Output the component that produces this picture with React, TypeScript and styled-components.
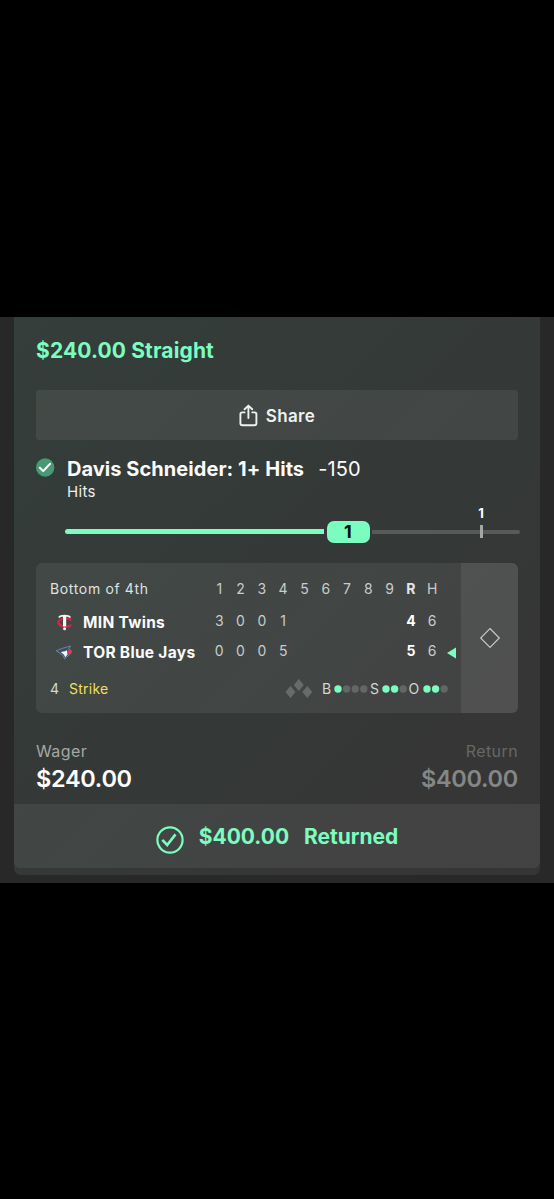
import React from "react";
import styled, { createGlobalStyle } from "styled-components";

const MINT = "#7cfdc0";

const GlobalStyle = createGlobalStyle`
  *, *::before, *::after { box-sizing: border-box; }
  body {
    margin: 0;
    background: #000;
    font-family: Inter, "Liberation Sans", sans-serif;
    -webkit-font-smoothing: antialiased;
  }
`;

const Screen = styled.div`
  width: 554px;
  height: 1199px;
  padding-top: 317px;
  background: #000;
  overflow: hidden;
`;

const Viewport = styled.main`
  height: 566px;
  padding: 0 14px;
  background: #282828;
`;

const Card = styled.article`
  display: flex;
  flex-direction: column;
  height: 558px;
  border-radius: 0 0 7px 7px;
  background: linear-gradient(135deg, #343e3a 0%, #343a38 40%, #353736 72%, #353535 100%);
`;

const Content = styled.div`
  height: 487px;
  padding: 21px 22px 0 22px;
`;

const BetTitle = styled.h1`
  margin: 0;
  height: 25px;
  line-height: 25px;
  font-size: 21px;
  font-weight: 700;
  letter-spacing: 0.14px;
  color: ${MINT};
  white-space: nowrap;
`;

const ShareButton = styled.button`
  display: flex;
  align-items: center;
  justify-content: center;
  gap: 8px;
  width: 100%;
  height: 50px;
  margin-top: 27px;
  padding: 0;
  border: 0;
  border-radius: 3px;
  background: rgba(255, 255, 255, 0.07);
  color: #eef1ef;
  font: 600 17px/20px Inter, sans-serif;
  letter-spacing: 0.35px;
`;

const ShareLabel = styled.span`
  padding-top: 1px;
`;

const Leg = styled.section`
  display: grid;
  grid-template-columns: 31px 1fr;
  margin-top: 17px;
  height: 45px;
`;

const LegStatus = styled.div`
  padding-top: 1px;
  line-height: 0;
`;

const LegName = styled.div`
  display: flex;
  gap: 14px;
  height: 23px;
  line-height: 24px;
  font-size: 20px;
  font-weight: 700;
  letter-spacing: 0.05px;
  color: #fbfcfb;
  white-space: nowrap;
`;

const Odds = styled.span`
  font-weight: 400;
  letter-spacing: 0.1px;
`;

const Market = styled.div`
  height: 20px;
  line-height: 23px;
  font-size: 15px;
  letter-spacing: 0.3px;
  color: #eceeed;
`;

const Progress = styled.div`
  display: flex;
  align-items: center;
  height: 61px;
  margin: 0 -2px 0 29px;
  padding-bottom: 2px;
`;

const Filled = styled.div`
  width: 259px;
  height: 5px;
  border-radius: 3px 0 0 3px;
  background: ${MINT};
`;

const Thumb = styled.div`
  width: 43px;
  height: 22px;
  margin: 0 2.5px;
  border-radius: 7px;
  background: ${MINT};
  color: #07100c;
  font-size: 18px;
  font-weight: 700;
  line-height: 22px;
  text-align: center;
`;

const Remaining = styled.div`
  flex: 1;
  display: flex;
  align-items: center;
  height: 4px;
  padding-left: 108px;
  border-radius: 0 2px 2px 0;
  background: #585959;
`;

const Goal = styled.div`
  position: relative;
  width: 3px;
  height: 13px;
  background: #a5a7a6;
`;

const GoalLabel = styled.span`
  position: absolute;
  bottom: 17px;
  left: -8px;
  width: 18px;
  font-size: 13px;
  font-weight: 700;
  line-height: 16px;
  text-align: center;
  color: #fff;
`;

const Scoreboard = styled.section`
  display: flex;
  height: 150px;
  border-radius: 6px;
  overflow: hidden;
  background: rgba(255, 255, 255, 0.065);
`;

const ScoreMain = styled.div`
  width: 425px;
  padding: 13px 5px 0 14px;
`;

const Row = styled.div`
  display: grid;
  grid-template-columns: 158.6px repeat(11, 21.3px) 1fr;
  align-items: center;
  height: 30px;
`;

const HeaderRow = styled(Row)`
  height: 25px;
  margin-bottom: 5px;
`;

const Inning = styled.div`
  font-size: 14px;
  letter-spacing: 0.65px;
  color: #dfe2e0;
  white-space: nowrap;
`;

const Team = styled.div`
  display: grid;
  grid-template-columns: 33px auto;
  align-items: center;
  margin-top: 2px;
  font-size: 15.5px;
  font-weight: 700;
  letter-spacing: 0.3px;
  color: #fafbfa;
  white-space: nowrap;
`;

const Cell = styled.div<{ $strong?: boolean; $score?: boolean }>`
  text-align: center;
  font-size: 14px;
  line-height: 18px;
  margin-top: ${(p) => (p.$score ? "-1px" : "0")};
  font-weight: ${(p) => (p.$strong ? 700 : 400)};
  color: ${(p) => (p.$strong ? (p.$score ? "#fff" : "#e4e6e5") : "#c9cccb")};
`;

const Batting = styled.svg`
  justify-self: end;
  margin-top: 3px;
`;

const Situation = styled.div`
  display: flex;
  align-items: center;
  height: 20px;
  margin-top: 12px;
  font-size: 14px;
  color: #d3d6d5;
`;

const PlayNumber = styled.span`
  width: 19px;
`;

const Play = styled.span`
  width: 216px;
  letter-spacing: 0.25px;
  color: #f1df5a;
`;

const Bases = styled.svg`
  margin-right: 9px;
`;

const Count = styled.span<{ $width: number }>`
  display: flex;
  align-items: center;
  width: ${(p) => p.$width}px;
`;

const CountLetter = styled.span<{ $width: number }>`
  width: ${(p) => p.$width}px;
`;

const Dots = styled.svg`
  display: block;
  margin-top: 1px;
`;

const ScoreSide = styled.div`
  display: flex;
  flex: 1;
  align-items: center;
  justify-content: center;
  background: rgba(255, 255, 255, 0.07);
`;

const Amounts = styled.div`
  display: flex;
  justify-content: space-between;
  margin-top: 28px;
`;

const Amount = styled.div<{ $muted?: boolean }>`
  text-align: ${(p) => (p.$muted ? "right" : "left")};
  color: ${(p) => (p.$muted ? "#858786" : "#fff")};
`;

const AmountLabel = styled.div<{ $muted?: boolean }>`
  height: 20px;
  line-height: 20px;
  font-size: 16px;
  letter-spacing: 0.4px;
  color: ${(p) => (p.$muted ? "#666867" : "#a4a7a5")};
`;

const AmountValue = styled.div`
  height: 34px;
  line-height: 35px;
  font-size: 23.5px;
  font-weight: 600;
  letter-spacing: -0.3px;
`;

const Footer = styled.footer`
  display: flex;
  justify-content: center;
  gap: 15px;
  height: 64px;
  padding-top: 20px;
  border-radius: 0 0 6px 6px;
  background: rgba(255, 255, 255, 0.065);
  line-height: 26px;
  font-size: 21px;
  font-weight: 700;
  letter-spacing: -0.02px;
  color: ${MINT};
`;

const ReturnedIcon = styled.svg`
  margin-top: 2px;
`;

function TwinsLogo() {
  return (
    <svg width="30" height="22" viewBox="0 0 30 22">
      <path d="M21.300 7.600V10.200C18 7.800 10.600 7.500 9.600 11.400C10.600 15 18 15.200 21.300 12.800V15.600C16 18.400 8.600 16.600 6.800 11.600C8.600 6.400 16.500 4.800 21.300 7.600Z" fill="#ce2742" />
      <path d="M8.300 6C9.400 3 19.800 3 20.900 6L20 7C19 6 17.800 5.700 16.200 5.700V15.400H13V5.700C11.400 5.700 10.200 6 9.200 7Z" fill="#f4f6f5" />
      <circle cx="14.600" cy="17.700" r="1.500" fill="#f4f6f5" />
    </svg>
  );
}

function BlueJaysLogo() {
  return (
    <svg width="30" height="20" viewBox="0 0 30 20">
      <path d="M6.200 8.800L12 6.400L20.500 4L18.600 7.200L21.500 9L19 13.200L14.600 16.800L13.200 13.600L10 11.400Z" fill="#3a4c70" stroke="#97a4bf" strokeWidth=".6" />
      <path d="M10.800 9.900L15 9.300L17 8.200L17.600 12.600L15.200 15.200L13.800 12.400Z" fill="#f4f7fb" />
      <path d="M17.300 8.900L20.800 7.600L22.400 10L20.400 12.200L17.500 11.800Z" fill="#e23852" />
    </svg>
  );
}

type Line = { name: string; logo: React.ReactNode; innings: string[]; runs: number; hits: number; batting?: boolean };

const lines: Line[] = [
  { name: "MIN Twins", logo: <TwinsLogo />, innings: ["3", "0", "0", "1"], runs: 4, hits: 6 },
  { name: "TOR Blue Jays", logo: <BlueJaysLogo />, innings: ["0", "0", "0", "5"], runs: 5, hits: 6, batting: true },
];

const counts = [
  { letter: "B", on: 1, total: 4, letterWidth: 12, width: 48 },
  { letter: "S", on: 2, total: 3, letterWidth: 11.5, width: 38.5 },
  { letter: "O", on: 2, total: 3, letterWidth: 14.3, width: 40 },
];

const innings = [1, 2, 3, 4, 5, 6, 7, 8, 9];

export default function App() {
  return (
    <Screen>
      <GlobalStyle />
      <Viewport>
        <Card>
          <Content>
            <BetTitle>$240.00 Straight</BetTitle>
            <ShareButton>
              <svg width="19" height="23" viewBox="0 0 19 23" fill="none" stroke="currentColor" strokeWidth="1.9" strokeLinecap="round" strokeLinejoin="round">
                <path d="M5.600 8.400H3.300Q1.400 8.400 1.400 10.200v9.100q0 1.900 1.900 1.900h12.200q1.900 0 1.900-1.900v-9.100q0-1.800-1.900-1.800h-2.200M9.400 14V1.800M5.600 5.300l3.800-3.700 3.800 3.700" />
              </svg>
              <ShareLabel>Share</ShareLabel>
            </ShareButton>
            <Leg>
              <LegStatus>
                <svg width="19" height="19" viewBox="0 0 19 19">
                  <circle cx="9.200" cy="9.500" r="9.200" fill="#479a74" />
                  <path d="M3.900 9.700l3.300 3.400 6.900-7.300" fill="none" stroke="#fff" strokeWidth="2" strokeLinecap="round" strokeLinejoin="round" />
                </svg>
              </LegStatus>
              <div>
                <LegName>
                  Davis Schneider: 1+ Hits <Odds>-150</Odds>
                </LegName>
                <Market>Hits</Market>
              </div>
            </Leg>
            <Progress>
              <Filled />
              <Thumb>1</Thumb>
              <Remaining>
                <Goal>
                  <GoalLabel>1</GoalLabel>
                </Goal>
              </Remaining>
            </Progress>
            <Scoreboard>
              <ScoreMain>
                <HeaderRow>
                  <Inning>Bottom of 4th</Inning>
                  {innings.map((n) => (
                    <Cell key={n}>{n}</Cell>
                  ))}
                  <Cell $strong>R</Cell>
                  <Cell>H</Cell>
                </HeaderRow>
                {lines.map((line) => (
                  <Row key={line.name}>
                    <Team>
                      {line.logo}
                      {line.name}
                    </Team>
                    {innings.map((n) => (
                      <Cell key={n} $score>
                        {line.innings[n - 1] ?? ""}
                      </Cell>
                    ))}
                    <Cell $strong $score>
                      {line.runs}
                    </Cell>
                    <Cell $score>{line.hits}</Cell>
                    {line.batting && (
                      <Batting width="9" height="12" viewBox="0 0 9 12">
                        <path d="M9 .5v11L0 6z" fill={MINT} />
                      </Batting>
                    )}
                  </Row>
                ))}
                <Situation>
                  <PlayNumber>4</PlayNumber>
                  <Play>Strike</Play>
                  <Bases width="28" height="20" viewBox="0 0 28 20">
                    <path d="M13.800 1l5 6-5 6-5-6zM5.500 8l5 6-5 6-5-6zM22.300 8l5 6-5 6-5-6z" fill="#696b6b" />
                  </Bases>
                  {counts.map((c) => (
                    <Count key={c.letter} $width={c.width}>
                      <CountLetter $width={c.letterWidth}>{c.letter}</CountLetter>
                      <Dots width={c.total * 8.6} height="8" viewBox={`0 0 ${c.total * 8.6} 8`}>
                        {Array.from({ length: c.total }, (_, i) => (
                          <circle key={i} cx={4 + i * 8.6} cy="4" r="3.7" fill={i < c.on ? MINT : "#646666"} />
                        ))}
                      </Dots>
                    </Count>
                  ))}
                </Situation>
              </ScoreMain>
              <ScoreSide>
                <svg width="22" height="22" viewBox="0 0 22 22">
                  <path d="M11 1.500l9.300 9.500-9.300 9.500L1.700 11z" fill="#4b4d4c" stroke="#c5c7c6" strokeWidth="1.2" />
                </svg>
              </ScoreSide>
            </Scoreboard>
            <Amounts>
              <Amount>
                <AmountLabel>Wager</AmountLabel>
                <AmountValue>$240.00</AmountValue>
              </Amount>
              <Amount $muted>
                <AmountLabel $muted>Return</AmountLabel>
                <AmountValue>$400.00</AmountValue>
              </Amount>
            </Amounts>
          </Content>
          <Footer>
            <ReturnedIcon width="28" height="28" viewBox="0 0 28 28" fill="none" stroke={MINT}>
              <circle cx="14" cy="14" r="12.6" strokeWidth="2.2" />
              <path d="M6.300 13.800l4.900 5.200 8.300-10.600" strokeWidth="2.6" />
            </ReturnedIcon>
            <span>$400.00</span>
            <span>Returned</span>
          </Footer>
        </Card>
      </Viewport>
    </Screen>
  );
}
